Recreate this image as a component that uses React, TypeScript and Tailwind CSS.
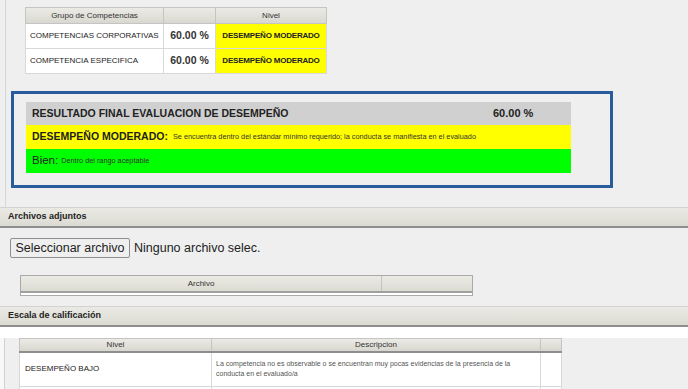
const competencias = [
  { nombre: "COMPETENCIAS CORPORATIVAS", valor: "60.00 %", nivel: "DESEMPEÑO MODERADO" },
  { nombre: "COMPETENCIA ESPECIFICA", valor: "60.00 %", nivel: "DESEMPEÑO MODERADO" },
];

function SectionHeader({ title }: { title: string }) {
  return (
    <div className="h-[21px] flex items-center pl-[8px] border-t border-[#d2d2d2] border-b-2 border-b-[#8e8e8e] bg-gradient-to-b from-[#eae9e3] to-[#dcdbd3] text-[9px] font-bold text-[#222]">
      {title}
    </div>
  );
}

export default function App() {
  return (
    <div className="w-[688px] h-[389px] overflow-hidden bg-[#efefef] text-[#222] font-['Liberation_Sans',Arial,sans-serif]">
      <div className="h-[207px] ml-[5px] border-l border-[#d6d6d6] pt-[7px]">
        <table className="ml-[19px] w-[302px] border-collapse border border-[#a8a8a8] bg-white">
          <thead>
            <tr className="h-[16px] bg-gradient-to-b from-[#ebeae4] to-[#d8d7cf]">
              <th className="w-[138px] border border-[#c4c4c4] text-[8px] font-normal text-[#333]">Grupo de Competencias</th>
              <th className="w-[52px] border border-[#c4c4c4]"></th>
              <th className="border border-[#c4c4c4] text-[8px] font-normal text-[#333]">Nivel</th>
            </tr>
          </thead>
          <tbody>
            {competencias.map((c) => (
              <tr key={c.nombre} className="h-[25px]">
                <td className="border border-[#d8d8d8] pl-[4px] text-[8px] text-[#222] whitespace-nowrap">{c.nombre}</td>
                <td className="border border-[#d8d8d8] text-center text-[10.5px] font-bold text-[#333] whitespace-nowrap">{c.valor}</td>
                <td className="border border-[#d8d8d8] bg-[#ffff00] text-center text-[8px] font-bold tracking-[-0.2px] whitespace-nowrap">{c.nivel}</td>
              </tr>
            ))}
          </tbody>
        </table>

        <div className="ml-[5px] mt-[17px] w-[602px] h-[97px] border-[3px] border-[#285c9c] pt-[8px] pl-[12px]">
          <div className="w-[545px]">
            <div className="h-[23px] bg-[#d0d0d0] flex items-center pl-[6px] text-[10.5px] font-bold text-[#222]">
              <span className="w-[461px]">RESULTADO FINAL EVALUACION DE DESEMPEÑO</span>
              <span className="text-[11px]">60.00 %</span>
            </div>
            <div className="h-[24px] bg-[#ffff00] flex items-center gap-[5px] pl-[6px]">
              <span className="text-[10.5px] font-bold">DESEMPEÑO MODERADO:</span>
              <span className="text-[7.3px] text-[#333]">
                Se encuentra dentro del estándar mínimo requerido; la conducta se manifiesta en el evaluado
              </span>
            </div>
            <div className="h-[24px] bg-[#00ff00] flex items-center gap-[3px] pl-[6px]">
              <span className="text-[11.5px]">Bien:</span>
              <span className="text-[7.3px] text-[#333]">Dentro del rango aceptable</span>
            </div>
          </div>
        </div>
      </div>

      <SectionHeader title="Archivos adjuntos" />

      <div className="flex items-center mt-[10px] ml-[10px]">
        <button className="w-[120px] h-[20px] border border-[#8f8f8f] rounded-[2px] bg-[#efefef] text-[12.5px] text-[#222]">
          Seleccionar archivo
        </button>
        <span className="ml-[4px] text-[12.5px] text-[#222]">Ninguno archivo selec.</span>
      </div>

      <div className="ml-[20px] mt-[17px] w-[453px] border border-[#a9a9a9]">
        <div className="flex h-[17px] bg-gradient-to-b from-[#ebeae4] to-[#dcdbd3] border-b-2 border-b-[#a0a0a0]">
          <div className="w-[361px] border-r border-[#c4c4c4] flex items-center justify-center text-[8px] text-[#333]">Archivo</div>
          <div className="flex-1"></div>
        </div>
        <div className="h-[2px] bg-white"></div>
      </div>

      <div className="mt-[10px]">
        <SectionHeader title="Escala de calificación" />
      </div>

      <div className="h-[11px] bg-white"></div>
      <div className="flex">
        <div className="w-[5px] bg-[#f8f8f8] border-r border-[#d2d2d2]"></div>
        <div className="pl-[14px]">
          <table className="w-[543px] border-collapse border border-[#a8a8a8] bg-white">
            <thead>
              <tr className="h-[12px] bg-gradient-to-b from-[#ebeae4] to-[#d8d7cf] border-b-2 border-b-[#8e8e8e]">
                <th className="w-[192px] border border-[#c4c4c4] text-[8px] font-normal text-[#333]">Nivel</th>
                <th className="w-[329px] border border-[#c4c4c4] text-[8px] font-normal text-[#333]">Descripcion</th>
                <th className="border border-[#c4c4c4]"></th>
              </tr>
            </thead>
            <tbody>
              <tr className="h-[34px]">
                <td className="border border-[#d8d8d8] pl-[5px] text-[8px] text-[#222]">DESEMPEÑO BAJO</td>
                <td className="border border-[#d8d8d8] px-[4px] text-[7px] leading-[10px] text-[#555]">
                  La competencia no es observable o se encuentran muy pocas evidencias de la presencia de la conducta en el evaluado/a
                </td>
                <td className="border border-[#d8d8d8]"></td>
              </tr>
              <tr className="h-[40px]">
                <td className="border border-[#d8d8d8] pl-[5px] text-[8px] text-[#333] align-top pt-[4px]">
                  <span className="ml-[44px]">1</span>
                </td>
                <td className="border border-[#d8d8d8] px-[4px] pt-[2px] align-top text-[7px] leading-[10px] text-[#555]">
                  El evaluado presenta ejemplos específicos de la conducta, existen múltiples aspectos que puede mejorar
                </td>
                <td className="border border-[#d8d8d8]"></td>
              </tr>
            </tbody>
          </table>
        </div>
      </div>
    </div>
  );
}
